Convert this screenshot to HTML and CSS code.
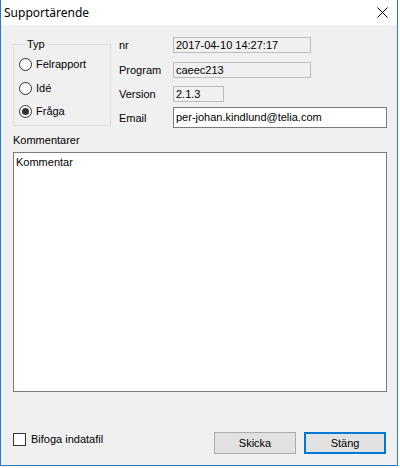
FILE: index.html
```html
<!DOCTYPE html>
<html lang="sv">
<head>
<meta charset="utf-8">
<title>Supportärende</title>
<link rel="stylesheet" href="styles.css">
</head>
<body>
<div class="window">
  <div class="titlebar">
    <span class="title">Supportärende</span>
    <svg class="close" width="11" height="11" viewBox="0 0 11 11"><path d="M0.5 0.5L10.5 10.5M10.5 0.5L0.5 10.5" stroke="#000" stroke-width="1" fill="none"/></svg>
  </div>
  <div class="client">
    <div class="top">
      <fieldset class="group">
        <legend class="legend">Typ</legend>
        <div class="radios">
          <label class="radio"><span class="circle"></span>Felrapport</label>
          <label class="radio"><span class="circle"></span>Idé</label>
          <label class="radio"><span class="circle checked"></span>Fråga</label>
        </div>
      </fieldset>
      <div class="fields">
        <div class="row r1"><span class="lbl">nr</span><span class="box ro wide">2017-04-10 14:27:17</span></div>
        <div class="row r2"><span class="lbl">Program</span><span class="box ro wide">caeec213</span></div>
        <div class="row r3"><span class="lbl">Version</span><span class="box ro narrow">2.1.3</span></div>
        <div class="row r4"><span class="lbl">Email</span><span class="box email">per-johan.kindlund@telia.com</span></div>
      </div>
    </div>
    <div class="comments-label">Kommentarer</div>
    <div class="textarea">Kommentar</div>
    <div class="bottom">
      <label class="check"><span class="checkbox"></span>Bifoga indatafil</label>
      <div class="buttons">
        <span class="btn">Skicka</span>
        <span class="btn default">Stäng</span>
      </div>
    </div>
  </div>
</div>
</body>
</html>
```
FILE: styles.css
```css
html, body {
  margin: 0;
  padding: 0;
  background: #ffffff;
}
body {
  font-family: "Liberation Sans", Arial, sans-serif;
  font-size: 11px;
  color: #000;
}
.window {
  width: 398px;
  height: 466px;
  box-sizing: border-box;
  border: 1px solid #2a77c6;
  border-top: none;
  display: flex;
  flex-direction: column;
}
.titlebar {
  height: 25px;
  background: #fff;
  display: flex;
  align-items: center;
  justify-content: space-between;
  padding: 0 9px 0 3px;
  flex: none;
}
.title {
  font-family: "Noto Sans", "Liberation Sans", sans-serif;
  font-size: 12px;
  line-height: 16px;
  margin-top: 1px;
}
.close {
  display: block;
  margin-top: 0px;
}
.client {
  flex: 1;
  background: #f0f0f0;
  padding: 12px 10px 0 12px;
  display: flex;
  flex-direction: column;
}
.top {
  display: flex;
  align-items: flex-start;
}
.group {
  margin: 1px 0 0 0;
  width: 98px;
  height: 88px;
  box-sizing: border-box;
  border: 1px solid #dcdcdc;
  padding: 7px 0 0 5px;
  min-width: 0;
}
.legend {
  padding: 0 2px;
  margin-left: 6px;
  line-height: 13px;
}
.radios {
  display: flex;
  flex-direction: column;
  gap: 10.5px;
}
.radio {
  display: flex;
  align-items: center;
  height: 13px;
  line-height: 13px;
}
.circle {
  width: 13px;
  height: 13px;
  box-sizing: border-box;
  border: 1px solid #333;
  border-radius: 50%;
  background: #fff;
  margin-right: 4px;
  display: flex;
  align-items: center;
  justify-content: center;
  flex: none;
}
.circle.checked::after {
  content: "";
  width: 7px;
  height: 7px;
  border-radius: 50%;
  background: #333;
}
.fields {
  margin-left: 8px;
  display: grid;
  grid-template-rows: 25px 24px 21px 21px;
}
.row {
  display: flex;
  align-items: center;
  align-self: start;
}
.lbl {
  width: 54px;
}
.box {
  box-sizing: border-box;
  height: 16px;
  line-height: 14px;
  padding: 0 2px;
  border: 1px solid #bdbdbd;
  background: #f0f0f0;
  white-space: nowrap;
}
.wide { width: 138px; }
.narrow { width: 51px; }
.email {
  width: 214px;
  height: 21px;
  line-height: 19px;
  background: #fff;
  border-color: #7a7a7a;
}
.comments-label {
  margin-top: 6px;
  line-height: 13px;
  height: 13px;
}
.textarea {
  margin-top: 5px;
  width: 374px;
  height: 240px;
  box-sizing: border-box;
  border: 1px solid #7a7a7a;
  background: #fff;
  padding: 3px 2px;
  line-height: 13px;
}
.bottom {
  margin-top: 40px;
  display: flex;
  justify-content: space-between;
  align-items: flex-start;
  width: 373px;
}
.check {
  display: flex;
  align-items: center;
  height: 13px;
  margin-top: 1px;
  line-height: 13px;
}
.checkbox {
  width: 13px;
  height: 13px;
  box-sizing: border-box;
  border: 1px solid #333;
  background: #fff;
  margin-right: 5px;
}
.buttons {
  display: flex;
  gap: 8px;
}
.btn {
  width: 82px;
  height: 22px;
  box-sizing: border-box;
  border: 1px solid #adadad;
  background: #e1e1e1;
  display: flex;
  align-items: center;
  justify-content: center;
}
.btn.default {
  border: 2px solid #0078d7;
}
```
